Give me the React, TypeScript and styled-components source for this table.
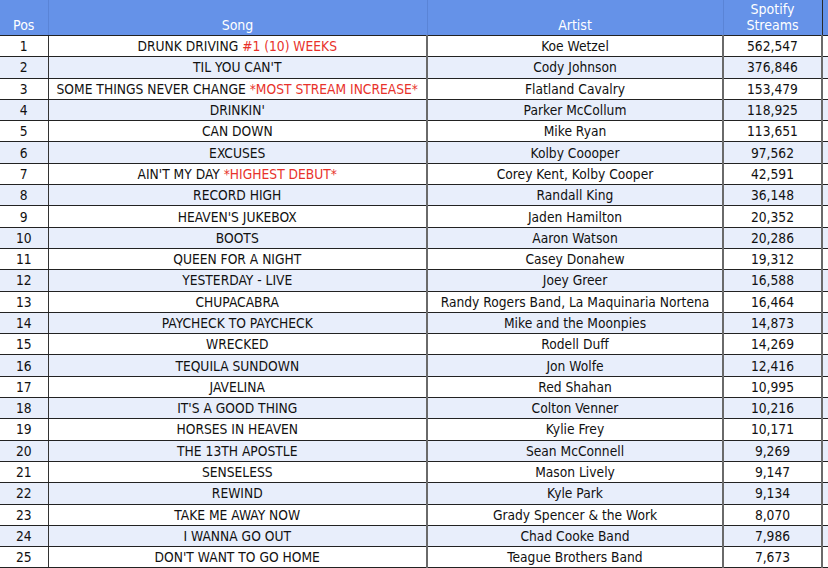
import styled, { createGlobalStyle } from "styled-components";

const Global = createGlobalStyle`
    html, body {
        margin: 0;
        padding: 0;
        background: #ffffff;
        overflow: hidden;
    }
`

const Wrap = styled.div`
    width: 828px;
    height: 568px;
    overflow: hidden;
`

const Tabela = styled.table`
    border-collapse: collapse;
    table-layout: fixed;
    width: 900px;
    font-family: "DejaVu Sans Condensed", "DejaVu Sans", sans-serif;
    font-size: 13.7px;
    color: #111111;
`

const Cabecalho = styled.th<{ $ultima?: boolean }>`
    background-color: #6592e8;
    color: #ffffff;
    font-weight: normal;
    font-size: 14px;
    height: 33px;
    padding: 0 0 2px 0;
    vertical-align: bottom;
    line-height: 16px;
    border-right: 1px solid ${p => (p.$ultima ? "#2a2a2a" : "#5a84d6")};
    border-bottom: 1px solid #222222;
`

const Linha = styled.tr<{ $par: boolean }>`
    height: 21.3px;
    background-color: ${p => (p.$par ? "#e8eefb" : "#ffffff")};
`

const Celula = styled.td<{ $grossa?: boolean }>`
    padding: 0;
    text-align: center;
    white-space: nowrap;
    overflow: hidden;
    line-height: 20px;
    border-bottom: 1px solid #222222;
    border-right: ${p => (p.$grossa ? "2px solid #6a6a6a" : "1px solid #333333")};
`

const Destaque = styled.span`
    color: #e8322b;
`

type Musica = {
    pos: number
    song: string
    extra?: string
    artist: string
    streams: string
}

const musicas: Musica[] = [
    { pos: 1, song: "DRUNK DRIVING", extra: "#1 (10) WEEKS", artist: "Koe Wetzel", streams: "562,547" },
    { pos: 2, song: "TIL YOU CAN'T", artist: "Cody Johnson", streams: "376,846" },
    { pos: 3, song: "SOME THINGS NEVER CHANGE", extra: "*MOST STREAM INCREASE*", artist: "Flatland Cavalry", streams: "153,479" },
    { pos: 4, song: "DRINKIN'", artist: "Parker McCollum", streams: "118,925" },
    { pos: 5, song: "CAN DOWN", artist: "Mike Ryan", streams: "113,651" },
    { pos: 6, song: "EXCUSES", artist: "Kolby Coooper", streams: "97,562" },
    { pos: 7, song: "AIN'T MY DAY", extra: "*HIGHEST DEBUT*", artist: "Corey Kent, Kolby Cooper", streams: "42,591" },
    { pos: 8, song: "RECORD HIGH", artist: "Randall King", streams: "36,148" },
    { pos: 9, song: "HEAVEN'S JUKEBOX", artist: "Jaden Hamilton", streams: "20,352" },
    { pos: 10, song: "BOOTS", artist: "Aaron Watson", streams: "20,286" },
    { pos: 11, song: "QUEEN FOR A NIGHT", artist: "Casey Donahew", streams: "19,312" },
    { pos: 12, song: "YESTERDAY - LIVE", artist: "Joey Greer", streams: "16,588" },
    { pos: 13, song: "CHUPACABRA", artist: "Randy Rogers Band, La Maquinaria Nortena", streams: "16,464" },
    { pos: 14, song: "PAYCHECK TO PAYCHECK", artist: "Mike and the Moonpies", streams: "14,873" },
    { pos: 15, song: "WRECKED", artist: "Rodell Duff", streams: "14,269" },
    { pos: 16, song: "TEQUILA SUNDOWN", artist: "Jon Wolfe", streams: "12,416" },
    { pos: 17, song: "JAVELINA", artist: "Red Shahan", streams: "10,995" },
    { pos: 18, song: "IT'S A GOOD THING", artist: "Colton Venner", streams: "10,216" },
    { pos: 19, song: "HORSES IN HEAVEN", artist: "Kylie Frey", streams: "10,171" },
    { pos: 20, song: "THE 13TH APOSTLE", artist: "Sean McConnell", streams: "9,269" },
    { pos: 21, song: "SENSELESS", artist: "Mason Lively", streams: "9,147" },
    { pos: 22, song: "REWIND", artist: "Kyle Park", streams: "9,134" },
    { pos: 23, song: "TAKE ME AWAY NOW", artist: "Grady Spencer & the Work", streams: "8,070" },
    { pos: 24, song: "I WANNA GO OUT", artist: "Chad Cooke Band", streams: "7,986" },
    { pos: 25, song: "DON'T WANT TO GO HOME", artist: "Teague Brothers Band", streams: "7,673" },
]

const App = () => {
    return (
        <>
            <Global />
            <Wrap>
                <Tabela>
                    <colgroup>
                        <col style={{ width: 48 }} />
                        <col style={{ width: 379 }} />
                        <col style={{ width: 296 }} />
                        <col style={{ width: 99 }} />
                        <col />
                    </colgroup>
                    <thead>
                        <tr>
                            <Cabecalho>Pos</Cabecalho>
                            <Cabecalho>Song</Cabecalho>
                            <Cabecalho>Artist</Cabecalho>
                            <Cabecalho $ultima>Spotify<br />Streams</Cabecalho>
                            <Cabecalho />
                        </tr>
                    </thead>
                    <tbody>
                        {musicas.map(m => (
                            <Linha key={m.pos} $par={m.pos % 2 === 0}>
                                <Celula>{m.pos}</Celula>
                                <Celula $grossa>
                                    {m.song}
                                    {m.extra && <> <Destaque>{m.extra}</Destaque></>}
                                </Celula>
                                <Celula $grossa>{m.artist}</Celula>
                                <Celula $grossa>{m.streams}</Celula>
                                <Celula />
                            </Linha>
                        ))}
                    </tbody>
                </Tabela>
            </Wrap>
        </>
    )
}

export default App
